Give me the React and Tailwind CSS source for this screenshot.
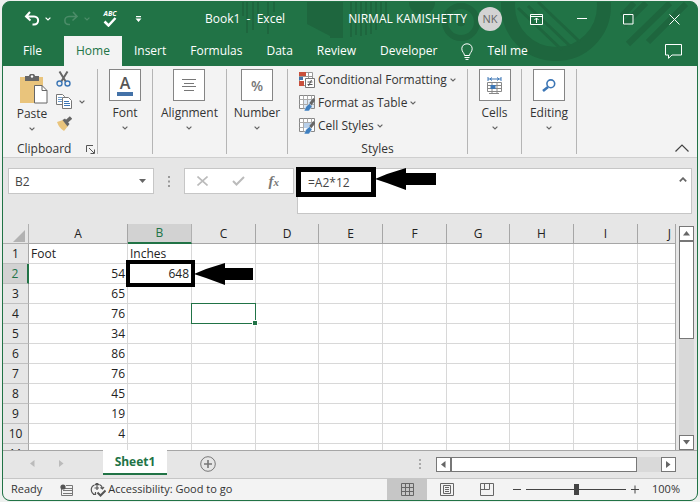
import React from "react";

const COLUMNS = ["A", "B", "C", "D", "E", "F", "G", "H", "I", "J"];
const COL_WIDTHS = [
  "w-[99px]", "w-[64px]", "w-[64px]", "w-[63px]", "w-[64px]",
  "w-[64px]", "w-[63px]", "w-[64px]", "w-[64px]", "",
];
const ROWS = [
  ["Foot", "Inches"],
  ["54", "648"],
  ["65"], ["76"], ["34"], ["86"], ["76"], ["45"], ["19"], ["4"], [""],
];

function Chevron({ className = "text-[#666]" }) {
  return (
    <svg className={className} width="6" height="4" viewBox="0 0 6 4" fill="none" stroke="currentColor" strokeWidth="1.2" aria-hidden="true">
      <path d="M.6.600L3 3L5.400.600" />
    </svg>
  );
}

function PointerArrow({ className, width }) {
  return (
    <svg className={className} width={width} height="22" viewBox={`0 0 ${width} 22`} aria-hidden="true">
      <path d={`M0 11L12 6L31 0V5H${width}V17H31V22L12 15Z`} fill="#000" />
    </svg>
  );
}

function HeaderArt() {
  return (
    <svg className="absolute top-0 right-0" width="460" height="64" viewBox="237 2 460 64" fill="none" stroke="#1e663e" aria-hidden="true">
      <g strokeWidth="2">
        <path d="M243 2V16M247 2V33M253 2V30M258 2V20M268 2V34M274 2V12" />
      </g>
      <path d="M307 2H330V36L307 24Z M330 2H343V38H330Z" fill="#1e663e" stroke="none" />
      <path d="M351 2V37M356 2V35M361 2V36M366 2V35M371 2V34M376 2V30M381 2V24M386 2V20" strokeWidth="2" />
      <circle cx="422" cy="2" r="13" fill="#1e663e" stroke="none" />
      <circle cx="461" cy="22" r="16" strokeWidth="6" />
      <circle cx="461" cy="22" r="4" fill="#1e663e" />
      <circle cx="556" cy="6" r="48" strokeWidth="14" />
      <path d="M518 8L562 50M528 6L570 46M538 2L580 42" strokeWidth="3" />
      <path d="M622 16L634 3M624 25L646 3M628 44L670 3M648 42L686 4" strokeWidth="6" />
    </svg>
  );
}

function TitleBar() {
  return (
    <div className="relative flex h-[34px] items-center text-white">
      <div className="flex items-center pl-5">
        <button aria-label="Undo" className="w-[18px]">
          <svg width="18" height="16" viewBox="0 0 18 16" fill="none" stroke="currentColor" strokeWidth="2">
            <path d="M7 1L3 5.5L7.500 9.500M3 5.500H11C16.500 5.500 16.500 13.500 11 13.500H9.500" />
          </svg>
        </button>
        <button aria-label="Undo history" className="ml-1 w-[9px]"><Chevron className="text-white" /></button>
        <button aria-label="Redo" className="ml-2 w-[18px] text-[#4b8c68]">
          <svg width="18" height="16" viewBox="0 0 18 16" fill="none" stroke="currentColor" strokeWidth="1.600">
            <path d="M11 1L15 5.500L10.500 9.500M15 5.500H7C1.500 5.500 1.500 13.500 7 13.500H8" />
          </svg>
        </button>
        <button aria-label="Redo history" className="ml-1 w-[9px]"><Chevron className="text-[#4b8c68]" /></button>
        <button aria-label="Spelling" className="ml-2 flex w-[18px] flex-col items-center">
          <span className="text-[7px] leading-[6px] font-bold italic">ABC</span>
          <svg width="14" height="10" viewBox="0 0 14 10" fill="none" stroke="currentColor" strokeWidth="2.500">
            <path d="M1.500 4.500L5.500 8.500L12.500 1" />
          </svg>
        </button>
        <button aria-label="Customize toolbar" className="ml-4 w-[9px]">
          <svg width="7" height="6" viewBox="0 0 7 6" fill="currentColor"><path d="M1 0h5v1.200H1zM0.500 2.500h6L3.500 6z" /></svg>
        </button>
      </div>
      <h1 className="ml-[61px] text-[12px] whitespace-pre">Book1  -  Excel</h1>
      <div className="ml-auto flex items-center">
        <span className="text-[12px]">NIRMAL KAMISHETTY</span>
        <span className="ml-[11px] flex size-6 items-center justify-center rounded-full bg-[#d3d3d3] text-[11px] text-[#666]">NK</span>
        <button aria-label="Ribbon display options" className="flex w-[68px] justify-center">
          <svg width="13" height="11" viewBox="0 0 13 11" fill="none" stroke="currentColor">
            <path d="M.5.500h12v10H.500zM.500 2.500h12M6.500 9V4M4.500 6l2-2 2 2" />
          </svg>
        </button>
        <button aria-label="Minimize" className="flex w-6 justify-center">
          <svg width="10" height="10" viewBox="0 0 10 10" stroke="currentColor"><path d="M0 4.500h10" /></svg>
        </button>
        <button aria-label="Maximize" className="flex w-[68px] justify-center">
          <svg width="11" height="11" viewBox="0 0 11 11" fill="none" stroke="currentColor"><path d="M.5.500h9.500v9.500H.500z" /></svg>
        </button>
        <button aria-label="Close" className="mr-[11px] flex w-6 justify-center">
          <svg width="11" height="11" viewBox="0 0 11 11" stroke="currentColor"><path d="M.5.500l10 10M10.500.500l-10 10" /></svg>
        </button>
      </div>
    </div>
  );
}

function RibbonTabs() {
  const tab = "h-full px-3";
  return (
    <nav aria-label="Ribbon" className="relative flex h-[30px] items-center pl-2 text-[12px] text-white">
      <button className="mr-[10px] h-full px-3">File</button>
      <button className="h-full bg-[#f3f3f3] px-3 text-[#217346]">Home</button>
      <button className={tab}>Insert</button>
      <button className={tab}>Formulas</button>
      <button className={tab}>Data</button>
      <button className={tab}>Review</button>
      <button className={tab}>Developer</button>
      <button className="ml-3 flex h-full items-center gap-[14px]">
        <svg width="12" height="17" viewBox="0 0 12 17" fill="none" stroke="currentColor" aria-hidden="true">
          <path d="M3.500 12.500C3.500 10 .800 9 .800 5.800C.800 2.800 3 .800 6 .800S11.200 2.800 11.200 5.800C11.200 9 8.500 10 8.500 12.500ZM3.500 14.500H8.500M4.500 16.400H7.500" />
        </svg>
        Tell me
      </button>
      <button aria-label="Comments" className="mr-[15px] ml-auto">
        <svg width="17" height="15" viewBox="0 0 17 15" fill="none" stroke="currentColor"><path d="M.5.500h16v10.500H7L3.500 14.300V11H.500z" /></svg>
      </button>
    </nav>
  );
}

function BoxGroup({ label, width, children }) {
  return (
    <div className={`my-[3px] flex shrink-0 flex-col items-center border-r border-[#b5b5b5] ${width}`}>
      <button className="flex flex-col items-center">
        <span className="flex size-8 items-center justify-center border border-[#858585] bg-white">{children}</span>
        <span className="mt-[3px] text-[12px] leading-[18px]">{label}</span>
        <span className="mt-1"><Chevron /></span>
      </button>
    </div>
  );
}

function TableBrushIcon({ full }) {
  return (
    <svg width="16" height="16" viewBox="0 0 16 16" fill="none" aria-hidden="true">
      <path d="M.5.500h15v13H.500z" fill="#fff" stroke="#888" />
      {full && <path d="M4 4.500h11v8.500H4z" fill="#dce8f4" />}
      {!full && <path d="M4 4h8v6H4z" fill="#b8d0ea" />}
      <path d="M.5 4.500h15M4.500.500v13M8.500 .500v4M12.500 .500v4M.500 9.500h4" stroke="#aaa" />
      {full && <path d="M8.500 4v9M12.500 4v9M4 9.500h11" stroke="#aaa" />}
      <path d="M15.500 4L11 9.500" stroke="#666" strokeWidth="3" />
      <path d="M10.500 8.500L7 11.500L5 16H10L13 11.500Z" fill="#3f7fbf" stroke="#fff" strokeWidth=".5" />
    </svg>
  );
}

function Ribbon() {
  return (
    <section aria-label="Home commands" className="relative flex h-[92px] border-b border-[#cfcfcf] bg-[#f3f3f3]">
      <div className="my-[3px] flex w-[95px] shrink-0 flex-col border-r border-[#b5b5b5]">
        <div className="flex">
          <button className="ml-2 flex w-[42px] flex-col items-center pt-[5px]">
            <svg className="ml-[3px]" width="29" height="30" viewBox="0 0 29 30" aria-hidden="true">
              <path d="M1 3h23v26H1z" fill="#e9c47c" />
              <path d="M6 2h4c0-3 6-3 6 0h4v5H6z" fill="#666" />
              <circle cx="13" cy="2.500" r="1.200" fill="#fff" />
              <path d="M15.500 11.500h7.500l5 5v12.500H15.500z" fill="#fff" stroke="#666" />
              <path d="M23 11.500v5h5" fill="none" stroke="#666" />
            </svg>
            <span className="mt-px text-[12px] leading-[18px]">Paste</span>
            <span className="mt-1"><Chevron /></span>
          </button>
          <div className="ml-[3px] flex flex-col items-start gap-[7px] pt-[2px]">
            <button aria-label="Cut">
              <svg width="15" height="16" viewBox="0 0 15 16" fill="none">
                <path d="M3.500 .500L10 11M11.500 .500L5 11" stroke="#666" strokeWidth="2" />
                <circle cx="3.500" cy="12.500" r="2.500" stroke="#3c76b5" strokeWidth="1.400" />
                <circle cx="11.500" cy="12.500" r="2.500" stroke="#3c76b5" strokeWidth="1.400" />
              </svg>
            </button>
            <button aria-label="Copy" className="flex items-center gap-[7px]">
              <svg width="16" height="15" viewBox="0 0 16 15" fill="#fff" stroke="#777">
                <path d="M.5.500h6l2 2v8H.500z" />
                <path d="M2 3.500h4M2 5.500h4M2 7.500h4" stroke="#6c9bcb" />
                <path d="M6.500 3.500h6l3 3v8h-9z" />
                <path d="M8 7.500h5M8 9.500h6M8 11.500h6" stroke="#3c76b5" />
              </svg>
              <Chevron />
            </button>
            <button aria-label="Format painter">
              <svg width="16" height="15" viewBox="0 0 16 15">
                <path d="M1 6L7 4L12 10L8 15Q3 12 1 6z" fill="#e9c47c" />
                <path d="M6.500 4L9 2.500L13.500 8L11.500 10.500Z" fill="#666" />
                <path d="M10 6L15 1.500" stroke="#666" strokeWidth="3.500" />
              </svg>
            </button>
          </div>
        </div>
        <div className="mt-auto flex items-center justify-between pr-[2px] pl-[14px] text-[12px] leading-[10px]">
          Clipboard
          <button aria-label="Clipboard settings">
            <svg width="9" height="9" viewBox="0 0 9 9" fill="none" stroke="#555"><path d="M.5 7V.500H7M3 3l5 5M8.500 4.500v4h-4" /></svg>
          </button>
        </div>
      </div>
      <BoxGroup label="Font" width="w-[55px]">
        <span className="flex flex-col items-center">
          <span className="text-[16px] leading-[17px] font-semibold text-[#555]">A</span>
          <span className="h-1 w-4 bg-[#4472a8]" />
        </span>
      </BoxGroup>
      <BoxGroup label="Alignment" width="w-[74px]">
        <svg width="14" height="12" viewBox="0 0 14 12" stroke="#777" aria-hidden="true"><path d="M0 .500h14M2 4.500h10M0 7.500h14M2 11.500h10" /></svg>
      </BoxGroup>
      <BoxGroup label="Number" width="w-[61px]">
        <span className="text-[14px] font-semibold text-[#777]">%</span>
      </BoxGroup>
      <div className="my-[3px] flex w-[180px] shrink-0 flex-col border-r border-[#b5b5b5] pl-[11px] text-[12px]">
        <div className="flex flex-col items-start gap-px">
          <button className="flex h-[22px] items-center gap-[3px] whitespace-nowrap">
            <svg width="16" height="16" viewBox="0 0 16 16" fill="none" aria-hidden="true">
              <path d="M.5.500h13v13H.500z" fill="#fff" stroke="#999" />
              <path d="M0 0h7v4H0zM0 9h5v5H0z" fill="#c9503c" />
              <path d="M0 4h4v4H0z" fill="#4472a8" />
              <path d="M9.500 0v6M13 4.500H0" stroke="#999" />
              <path d="M6.500 6.500h9v9h-9z" fill="#fff" stroke="#777" />
              <path d="M8.500 10h5M8.500 12.500h5M12.500 8l-3 6" stroke="#555" />
            </svg>
            Conditional Formatting <Chevron />
          </button>
          <button className="flex h-[22px] items-center gap-[3px] whitespace-nowrap"><TableBrushIcon full /> Format as Table <Chevron /></button>
          <button className="flex h-[22px] items-center gap-[3px] whitespace-nowrap"><TableBrushIcon /> Cell Styles <Chevron /></button>
        </div>
        <span className="mt-auto pr-[11px] text-center leading-[10px]">Styles</span>
      </div>
      <BoxGroup label="Cells" width="w-[54px]">
        <svg width="16" height="17" viewBox="0 0 16 17" fill="none" aria-hidden="true">
          <path d="M1 0v4M14 0v4M1 2h13M5 .500L3 2l2 1.500M10 .500L12 2l-2 1.500" stroke="#3c76b5" />
          <path d="M.5 5.500h14v9H.500zM.500 8.500h14M.500 11.500h14M5 5.500v11M10 5.500v11M2 16.500h10" stroke="#888" />
          <path d="M3.500 8h5v4h-5z" fill="#3c76b5" />
        </svg>
      </BoxGroup>
      <BoxGroup label="Editing" width="w-[55px]">
        <svg width="14" height="13" viewBox="0 0 14 13" fill="none" stroke="#3c76b5" aria-hidden="true">
          <circle cx="8.800" cy="4.800" r="3.900" strokeWidth="1.600" /><path d="M6 8L1 12" strokeWidth="2.600" />
        </svg>
      </BoxGroup>
      <button aria-label="Collapse ribbon" className="mt-auto mr-2 mb-[5px] ml-auto">
        <svg width="14" height="8" viewBox="0 0 14 8" fill="none" stroke="#444" strokeWidth="1.200"><path d="M.5 7.500L7 1l6.500 6.500" /></svg>
      </button>
    </section>
  );
}

function FormulaBar() {
  return (
    <section aria-label="Formula bar" className="flex h-[66px] items-start bg-[#e6e6e6] px-[5px] pt-[10px] text-[12px] text-[#444]">
      <div className="flex h-[26px] w-[146px] shrink-0 items-center border border-[#c6c6c6] bg-white">
        <input aria-label="Name box" defaultValue="B2" className="h-full min-w-0 flex-1 bg-transparent pl-[6px] outline-none" />
        <button aria-label="Named ranges" className="w-5 pl-[6px]">
          <svg width="7" height="4" viewBox="0 0 7 4" fill="#666"><path d="M0 0h7L3.500 4z" /></svg>
        </button>
      </div>
      <svg className="mt-2 ml-[14px] shrink-0" width="2" height="11" viewBox="0 0 2 11" fill="#999" aria-hidden="true"><path d="M0 0h2v2H0zM0 4.500h2v2H0zM0 9h2v2H0z" /></svg>
      <div className="ml-[14px] flex h-[26px] w-[110px] shrink-0 items-center justify-between border border-[#c6c6c6] bg-white pr-[14px] pl-3">
        <button aria-label="Cancel">
          <svg width="11" height="10" viewBox="0 0 11 10" stroke="#bbb" strokeWidth="1.600"><path d="M.5.500l10 9M10.500.500l-10 9" /></svg>
        </button>
        <button aria-label="Enter">
          <svg width="13" height="10" viewBox="0 0 13 10" fill="none" stroke="#bbb" strokeWidth="2"><path d="M1 5l3.500 3.500L12 1" /></svg>
        </button>
        <button aria-label="Insert function" className="font-['Liberation_Serif',serif] text-[15px] leading-4 font-bold text-[#777] italic">
          f<span className="text-[11px]">x</span>
        </button>
      </div>
      <div className="relative ml-[3px] flex h-[46px] min-w-0 flex-1 items-start border border-[#c6c6c6] bg-white">
        <input aria-label="Formula" defaultValue="=A2*12" className="h-[26px] min-w-0 flex-1 bg-transparent pl-[10px] outline-none" />
        <button aria-label="Collapse formula bar" className="mt-[8px] mr-1">
          <svg width="8" height="5" viewBox="0 0 8 5" fill="none" stroke="#666" strokeWidth="1.800"><path d="M.8 4.300L4 1.200l3.200 3.100" /></svg>
        </button>
        <span className="pointer-events-none absolute -top-[2px] -left-[2px] h-[30px] w-[80px] border-5 border-black" />
        <PointerArrow className="absolute -top-px left-[77px]" width={61} />
      </div>
    </section>
  );
}

function Sheet() {
  return (
    <section aria-label="Worksheet" className="flex min-h-0 flex-1 bg-[#e6e6e6]">
      <div className="min-w-0 flex-1 overflow-hidden border-r border-[#a6a6a6] bg-white">
        <table className="w-full table-fixed border-separate border-spacing-0 text-[12px] leading-[19px] text-[#222]">
          <colgroup>
            <col className="w-[26px]" />
            {COL_WIDTHS.map((w, i) => <col key={COLUMNS[i]} className={w} />)}
          </colgroup>
          <thead>
            <tr className="h-5 bg-[#e6e6e6]">
              <th aria-label="Select all" className="border-r border-b border-[#b0b0b0] p-0">
                <svg className="mt-1 ml-[10px]" width="12" height="12" viewBox="0 0 12 12" fill="#b2b2b2" aria-hidden="true"><path d="M12 0v12H0z" /></svg>
              </th>
              {COLUMNS.map((c) => (
                <th
                  key={c}
                  scope="col"
                  className={
                    c === "B"
                      ? "h-5 border-r border-b-2 border-r-[#b0b0b0] border-b-[#217346] bg-[#d2d2d2] p-0 leading-4 font-normal text-[#217346]"
                      : c === "J"
                        ? "h-5 border-b border-[#a6a6a6] p-0 pr-1 text-right leading-4 font-normal"
                        : "h-5 border-r border-b border-[#a6a6a6] p-0 leading-4 font-normal"
                  }
                >
                  {c}
                </th>
              ))}
            </tr>
          </thead>
          <tbody>
            {ROWS.map((row, r) => (
              <tr key={r} className="h-5">
                <th
                  scope="row"
                  className={
                    r === 1
                      ? "border-r-2 border-b border-r-[#217346] border-b-[#c0c0c0] bg-[#d2d2d2] p-0 font-normal text-[#217346]"
                      : "border-r border-b border-r-[#a6a6a6] border-b-[#c0c0c0] bg-[#e6e6e6] p-0 font-normal"
                  }
                >
                  {r + 1}
                </th>
                {COLUMNS.map((c, i) => (
                  <td
                    key={c}
                    className={`relative h-5 border-b border-[#d8d8d8] p-0 ${c === "J" ? "" : "border-r"} ${r === 0 ? "pl-[2px] text-left" : "pr-[2px] text-right"}`}
                  >
                    {row[i] ?? ""}
                    {r === 1 && c === "B" && (
                      <>
                        <span className="pointer-events-none absolute -top-1 -left-[2px] z-10 h-[27px] w-[69px] border-4 border-black" />
                        <PointerArrow className="absolute -top-px left-[66px] z-10" width={59} />
                      </>
                    )}
                    {r === 3 && c === "C" && (
                      <span className="absolute -top-px -left-px z-10 h-[21px] w-[65px] border border-[#217346]">
                        <span className="absolute -right-[3px] -bottom-[3px] size-[6px] border border-white bg-[#217346]" />
                      </span>
                    )}
                  </td>
                ))}
              </tr>
            ))}
          </tbody>
        </table>
      </div>
      <div className="mt-[2px] mr-[3px] ml-[3px] flex w-[15px] shrink-0 flex-col bg-[#d9d9d9]">
        <button aria-label="Scroll up" className="flex h-[15px] items-center justify-center border border-[#777] bg-white">
          <svg width="7" height="5" viewBox="0 0 7 5" fill="#666"><path d="M0 4.500L3.500 0L7 4.500z" /></svg>
        </button>
        <span className="h-[98px] border border-[#777] bg-white" />
        <button aria-label="Scroll down" className="mt-auto flex h-[15px] items-center justify-center border border-[#777] bg-white">
          <svg width="7" height="5" viewBox="0 0 7 5" fill="#666"><path d="M0 0h7L3.500 4.500z" /></svg>
        </button>
      </div>
    </section>
  );
}

function SheetTabs() {
  return (
    <div className="flex h-7 items-start border-t border-[#a6a6a6] bg-[#e6e6e6]">
      <button aria-label="Previous sheet" className="mt-[9px] ml-[27px]">
        <svg width="5" height="7" viewBox="0 0 5 7" fill="#bbb"><path d="M4.500 0v7L0 3.500z" /></svg>
      </button>
      <button aria-label="Next sheet" className="mt-[9px] ml-6">
        <svg width="5" height="7" viewBox="0 0 5 7" fill="#bbb"><path d="M0 0v7l4.500-3.500z" /></svg>
      </button>
      <button className="-mt-px ml-[39px] h-[25px] w-16 border-b-2 border-[#217346] bg-white text-[12px] font-bold text-[#217346]">Sheet1</button>
      <button aria-label="New sheet" className="mt-[5px] ml-[33px]">
        <svg width="16" height="16" viewBox="0 0 16 16" fill="none" stroke="#777"><circle cx="8" cy="8" r="7.300" /><path d="M8 4v8M4 8h8" strokeWidth="1.600" /></svg>
      </button>
      <svg className="mt-2 ml-auto" width="2" height="10" viewBox="0 0 2 10" fill="#aaa" aria-hidden="true"><path d="M0 0h2v2H0zM0 4h2v2H0zM0 8h2v2H0z" /></svg>
      <div className="mt-[6px] mr-[21px] ml-[15px] flex h-[15px] w-[240px] bg-[#d9d9d9]">
        <button aria-label="Scroll left" className="flex w-[15px] items-center justify-center border border-[#777] bg-white">
          <svg width="5" height="7" viewBox="0 0 5 7" fill="#666"><path d="M4.500 0v7L0 3.500z" /></svg>
        </button>
        <span className="w-[186px] border border-[#777] bg-white" />
        <button aria-label="Scroll right" className="ml-auto flex w-[15px] items-center justify-center border border-[#777] bg-white">
          <svg width="5" height="7" viewBox="0 0 5 7" fill="#666"><path d="M0 0v7l4.500-3.500z" /></svg>
        </button>
      </div>
    </div>
  );
}

function StatusBar() {
  const view = "flex h-full w-10 items-center justify-center";
  return (
    <footer className="flex h-[22px] items-center border-t border-[#c6c6c6] bg-[#f3f3f3] text-[11px] text-[#333]">
      <span className="ml-2">Ready</span>
      <button aria-label="Record macro" className="ml-[18px]">
        <svg width="14" height="12" viewBox="0 0 14 12" fill="none" stroke="#777">
          <path d="M1.500 5v6.500h11V1.500H6M5 4.500h7M3 6.500h9M3 9.500h9" /><circle cx="3" cy="3" r="2.600" fill="#555" stroke="none" />
        </svg>
      </button>
      <button className="ml-4 flex items-center gap-[2px]">
        <svg width="16" height="14" viewBox="0 0 16 14" fill="none" stroke="#555" strokeWidth="1.200" aria-hidden="true">
          <path d="M4.500 2A5 5 0 0 0 5 11.500M3 11.500H5.500V9M7 0v7M5 2l2-2 2 2M4.500 5H9M9.500 1.500A5 5 0 0 1 12.500 5.500M10.500 4.500l2 1.500L14 4" /><path d="M7.500 9.500l3 3L15.500 7.500" strokeWidth="2" />
        </svg>
        Accessibility: Good to go
      </button>
      <div className="ml-auto flex h-full">
        <button aria-label="Normal view" className="flex h-full w-10 items-center justify-center bg-[#c6c6c6]">
          <svg width="13" height="13" viewBox="0 0 13 13" fill="none" stroke="#666"><path d="M.5.500h12v12H.500zM.500 4.500h12M.500 8.500h12M4.500.500v12M8.500.500v12" /></svg>
        </button>
        <button aria-label="Page layout view" className={view}>
          <svg width="14" height="13" viewBox="0 0 14 13" fill="none" stroke="#666"><path d="M.5.500h13v12H.500zM3.500 2.500h7v8h-7zM5 4.500h4M5 6.500h4M5 8.500h4" /></svg>
        </button>
        <button aria-label="Page break view" className={view}>
          <svg width="14" height="13" viewBox="0 0 14 13" fill="none" stroke="#666"><path d="M.5.500h13v12H.500zM4.500.500v6M9.500.500v6M.500 6.500h9" /></svg>
        </button>
      </div>
      <button aria-label="Zoom out" className="ml-[6px]"><svg width="8" height="9" viewBox="0 0 8 9" stroke="#444"><path d="M0 4.500h8" /></svg></button>
      <input
        type="range"
        aria-label="Zoom"
        defaultValue="50"
        className="mx-[5px] h-[11px] w-[100px] appearance-none bg-[linear-gradient(#444,#444)] bg-[length:100%_1px] bg-center bg-no-repeat [&::-webkit-slider-thumb]:h-[11px] [&::-webkit-slider-thumb]:w-[5px] [&::-webkit-slider-thumb]:appearance-none [&::-webkit-slider-thumb]:bg-[#444]"
      />
      <button aria-label="Zoom in"><svg width="8" height="9" viewBox="0 0 8 9" stroke="#444"><path d="M0 4.500h8M4 .500v8" /></svg></button>
      <span className="mr-[17px] ml-[13px]">100%</span>
    </footer>
  );
}

export default function App() {
  return (
    <main className="h-screen bg-[#eef1ef] px-[2px] py-px font-['Open_Sans','Noto_Sans',sans-serif] text-[#333]">
      <div className="flex h-full flex-col overflow-hidden rounded-lg border border-[#217346] bg-[#217346]">
        <header className="relative">
          <HeaderArt />
          <TitleBar />
          <RibbonTabs />
        </header>
        <Ribbon />
        <FormulaBar />
        <Sheet />
        <SheetTabs />
        <StatusBar />
      </div>
    </main>
  );
}
